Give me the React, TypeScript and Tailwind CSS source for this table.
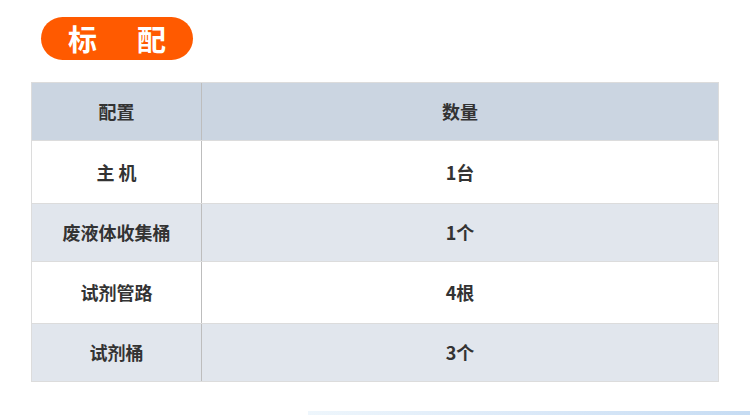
import React from 'react';

const rows = [
    {name: '主 机', qty: '1台'},
    {name: '废液体收集桶', qty: '1个'},
    {name: '试剂管路', qty: '4根'},
    {name: '试剂桶', qty: '3个'},
];

const heights = ['h-[63px]', 'h-[58px]', 'h-[62px]', 'h-[58px]'];

const App = () => {
    return (
        <div
            className="relative w-[750px] h-[415px] bg-white overflow-hidden"
            style={{fontFamily: '"Noto Sans CJK SC", "Noto Sans", sans-serif'}}
        >
            <div className="pt-[17px] pl-[41px]">
                <div className="w-[152px] h-[43px] rounded-full bg-[#ff5a00] flex items-center justify-center gap-[40px] text-white text-[29px] font-bold leading-none">
                    <span>标</span>
                    <span>配</span>
                </div>
            </div>

            <div className="ml-[31px] mt-[22px] w-[688px] border border-[#dcdcdc] text-[#333] text-[18px] font-bold">
                <div className="flex h-[57px] bg-[#cbd5e1]">
                    <div className="w-[170px] flex items-center justify-center border-r border-[#bdbdbd]">配置</div>
                    <div className="flex-1 flex items-center justify-center">数量</div>
                </div>
                {rows.map((row, index) => {
                    return (
                        <div
                            key={index}
                            className={`flex border-t border-[#dcdcdc] ${heights[index]} ${index % 2 === 1 ? 'bg-[#e1e6ed]' : 'bg-white'}`}
                        >
                            <div className="w-[170px] flex items-center justify-center border-r border-[#bdbdbd]">{row.name}</div>
                            <div className="flex-1 flex items-center justify-center">{row.qty}</div>
                        </div>
                    );
                })}
            </div>

            <div className="absolute left-[308px] top-[411px] w-[442px] h-[4px] bg-gradient-to-r from-[#eef6fc] via-[#dbe9f8] to-[#c6dcf3]"></div>
        </div>
    );
};

export default App;
